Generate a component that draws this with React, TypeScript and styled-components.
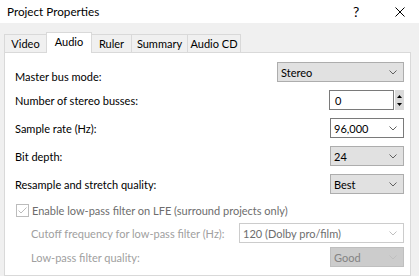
import React from "react";
import styled, { createGlobalStyle } from "styled-components";

const Global = createGlobalStyle`
  html, body { margin: 0; padding: 0; background: #f0f0f0; }
  body { font-family: Lato, "Noto Sans", sans-serif; font-size: 11px; color: #000; }
`;

const Window = styled.div`
  width: 419px;
  height: 276px;
  background: #f0f0f0;
  overflow: hidden;
  display: flex;
  flex-direction: column;
`;

const TitleBar = styled.div`
  height: 23px;
  flex: none;
  background: #ffffff;
  display: flex;
  align-items: center;
  padding-left: 7px;
`;

const Title = styled.div`
  font-size: 11.7px;
  flex: 1;
  padding-bottom: 1px;
`;

const Help = styled.div`
  width: 12px;
  font-size: 14px;
  margin-right: 30px;
  padding-bottom: 1px;
`;

const Close = styled.div`
  width: 10px;
  height: 10px;
  margin-right: 14px;
  display: flex;
`;

const Body = styled.div`
  flex: 1;
  padding: 9px 8px 0 4px;
  display: flex;
  flex-direction: column;
`;

const TabStrip = styled.div`
  display: flex;
  align-items: flex-end;
  height: 21px;
  margin-bottom: -1px;
  position: relative;
  z-index: 1;
`;

const Tab = styled.div<{ $w: number; $active?: boolean }>`
  width: ${(p) => p.$w}px;
  box-sizing: border-box;
  height: ${(p) => (p.$active ? 21 : 19)}px;
  border: 1px solid #d9d9d9;
  border-bottom: ${(p) => (p.$active ? "none" : "1px solid #d9d9d9")};
  background: ${(p) => (p.$active ? "#ffffff" : "#f0f0f0")};
  margin-right: -1px;
  display: flex;
  justify-content: center;
  align-items: ${(p) => (p.$active ? "flex-start" : "center")};
  padding-top: ${(p) => (p.$active ? 2 : 0)}px;
  line-height: 14px;
  position: relative;
  z-index: ${(p) => (p.$active ? 2 : 1)};
`;

const Panel = styled.div`
  flex: 1;
  background: #ffffff;
  border: 1px solid #d9d9d9;
  padding: 9px 6px 0 10px;
  display: flex;
  flex-direction: column;
`;

const Row = styled.div<{ $mt?: number; $indent?: number }>`
  display: flex;
  align-items: center;
  height: 20px;
  margin-top: ${(p) => p.$mt ?? 0}px;
  padding-left: ${(p) => p.$indent ?? 0}px;
`;

const Label = styled.div<{ $disabled?: boolean; $dy?: number }>`
  flex: 1;
  color: ${(p) => (p.$disabled ? "#a0a0a0" : "#000000")};
  white-space: nowrap;
  position: relative;
  top: ${(p) => p.$dy ?? 0}px;
`;

type ComboKind = "button" | "edit" | "disabledEdit" | "disabledButton";

const comboColors: Record<ComboKind, { bg: string; border: string; text: string; chevron: string }> = {
  button: { bg: "#e1e1e1", border: "#adadad", text: "#000000", chevron: "#606060" },
  edit: { bg: "#ffffff", border: "#7a7a7a", text: "#000000", chevron: "#606060" },
  disabledEdit: { bg: "#ffffff", border: "#cccccc", text: "#6d6d6d", chevron: "#bfbfbf" },
  disabledButton: { bg: "#cccccc", border: "#bfbfbf", text: "#838383", chevron: "#bfbfbf" },
};

const ComboBox = styled.div<{ $w: number; $kind: ComboKind }>`
  width: ${(p) => p.$w}px;
  height: 20px;
  box-sizing: border-box;
  flex: none;
  background: ${(p) => comboColors[p.$kind].bg};
  border: 1px solid ${(p) => comboColors[p.$kind].border};
  color: ${(p) => comboColors[p.$kind].text};
  display: flex;
  align-items: center;
  padding: 0 6px 0 3px;
`;

const ComboText = styled.span`
  flex: 1;
  white-space: nowrap;
`;

const Chevron = ({ color }: { color: string }) => (
  <svg width="8" height="5" viewBox="0 0 8 5">
    <path d="M0.5 0.5 L4 4 L7.5 0.5" fill="none" stroke={color} strokeWidth="1" />
  </svg>
);

const Combo = ({ w, kind, value }: { w: number; kind: ComboKind; value: string }) => (
  <ComboBox $w={w} $kind={kind}>
    <ComboText>{value}</ComboText>
    <Chevron color={comboColors[kind].chevron} />
  </ComboBox>
);

const SpinWrap = styled.div`
  display: flex;
  gap: 1px;
  flex: none;
`;

const SpinEdit = styled.div`
  width: 65px;
  height: 20px;
  box-sizing: border-box;
  border: 1px solid #7a7a7a;
  background: #fff;
  display: flex;
  align-items: center;
  padding-left: 5px;
`;

const SpinButtons = styled.div`
  width: 9px;
  height: 20px;
  background: #dadada;
  display: flex;
  flex-direction: column;
  justify-content: space-between;
  align-items: center;
  padding: 5px 0 4px;
  box-sizing: border-box;
`;

const CheckRow = styled.div`
  display: flex;
  align-items: center;
  height: 20px;
  margin-top: 6px;
  padding-left: 1px;
  gap: 3px;
  color: #6d6d6d;
  white-space: nowrap;
`;

const CheckBox = styled.div`
  width: 13px;
  height: 13px;
  box-sizing: border-box;
  border: 1px solid #bcbcbc;
  background: #fff;
  display: flex;
  align-items: center;
  justify-content: center;
  flex: none;
`;

export default function App() {
  return (
    <>
      <Global />
      <Window>
        <TitleBar>
          <Title>Project Properties</Title>
          <Help>?</Help>
          <Close>
            <svg width="10" height="10" viewBox="0 0 10 10">
              <path d="M0.5 0.5 L9.5 9.5 M9.5 0.5 L0.5 9.5" stroke="#000" strokeWidth="1" fill="none" />
            </svg>
          </Close>
        </TitleBar>
        <Body>
          <TabStrip>
            <Tab $w={43}>Video</Tab>
            <Tab $w={46} $active>Audio</Tab>
            <Tab $w={41}>Ruler</Tab>
            <Tab $w={57}>Summary</Tab>
            <Tab $w={54}>Audio CD</Tab>
          </TabStrip>
          <Panel>
            <Row>
              <Label $dy={4}>Master bus mode:</Label>
              <Combo w={127} kind="button" value="Stereo" />
            </Row>
            <Row $mt={8}>
              <Label>Number of stereo busses:</Label>
              <SpinWrap>
                <SpinEdit>0</SpinEdit>
                <SpinButtons>
                  <svg width="5" height="3" viewBox="0 0 5 3"><path d="M0 3 L2.5 0 L5 3 Z" fill="#000" /></svg>
                  <svg width="5" height="3" viewBox="0 0 5 3"><path d="M0 0 L2.5 3 L5 0 Z" fill="#000" /></svg>
                </SpinButtons>
              </SpinWrap>
            </Row>
            <Row $mt={8}>
              <Label>Sample rate (Hz):</Label>
              <Combo w={74} kind="edit" value="96,000" />
            </Row>
            <Row $mt={8}>
              <Label>Bit depth:</Label>
              <Combo w={74} kind="button" value="24" />
            </Row>
            <Row $mt={8}>
              <Label>Resample and stretch quality:</Label>
              <Combo w={74} kind="button" value="Best" />
            </Row>
            <CheckRow>
              <CheckBox>
                <svg width="9" height="7" viewBox="0 0 9 7">
                  <path d="M0.5 3.5 L3 6 L8.5 0.5" fill="none" stroke="#bcbcbc" strokeWidth="1" />
                </svg>
              </CheckBox>
              Enable low-pass filter on LFE (surround projects only)
            </CheckRow>
            <Row $mt={3} $indent={16}>
              <Label $disabled>Cutoff frequency for low-pass filter (Hz):</Label>
              <Combo w={165} kind="disabledEdit" value="120 (Dolby pro/film)" />
            </Row>
            <Row $mt={4} $indent={16}>
              <Label $disabled>Low-pass filter quality:</Label>
              <Combo w={74} kind="disabledButton" value="Good" />
            </Row>
          </Panel>
        </Body>
      </Window>
    </>
  );
}
